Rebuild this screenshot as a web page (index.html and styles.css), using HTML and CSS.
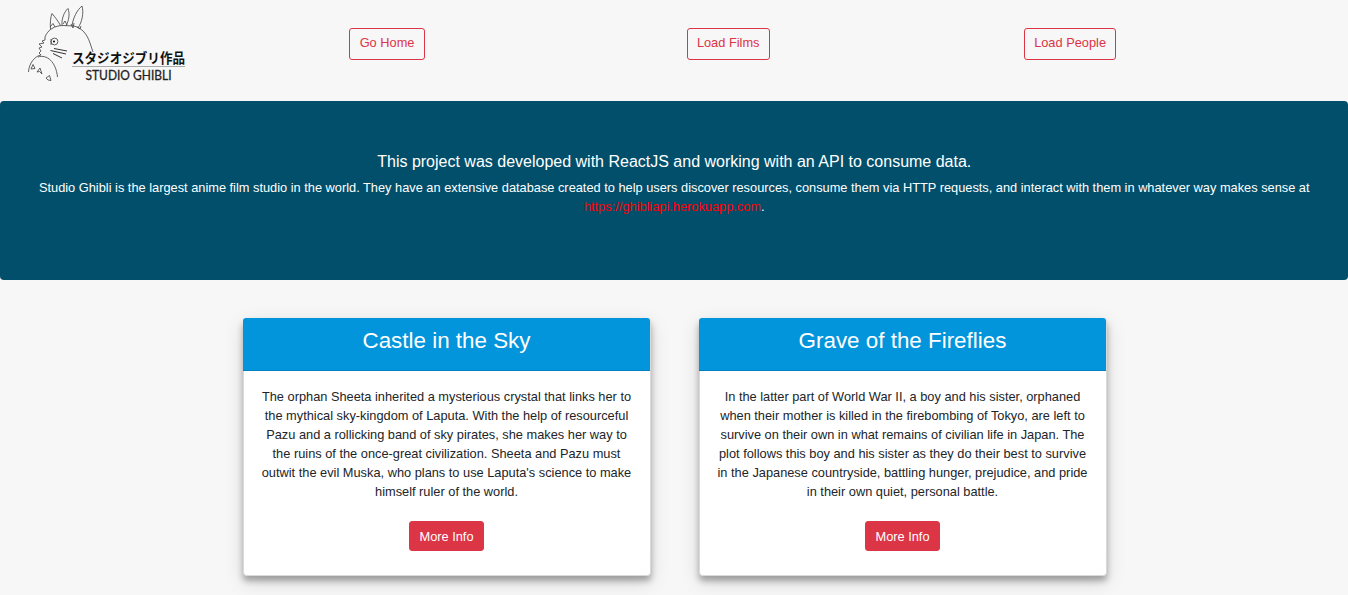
FILE: index.html
```html
<!DOCTYPE html>
<html lang="en">
<head>
<meta charset="utf-8">
<title>Studio Ghibli</title>
<link rel="stylesheet" href="styles.css">
</head>
<body>
<header class="navbar">
  <div class="nav-cell logo-cell">
    <svg class="logo" viewBox="0 0 200 100" role="img" aria-label="Studio Ghibli">
      <g class="sketch">
        <path d="M45 37 C46 34 49 30 52 28.500 C55 26.500 59 25.500 63 25.500 L74 26 C82 28 87 34 90 43 L93 52"/>
        <path d="M50.500 29 C50 23 50.500 17 52 13.500 C55 17 58 21 60.500 25.500 M50 27 L53 23.500 L55 27"/>
        <path d="M62 25 C61.500 19 64 12 68 8.500 C70 14 69 20 66 26 M63 24 L65 21 L67 25"/>
        <path d="M72 26 C73 18 77 10 82 6 C84 13 82 22 78 28 M71 24 L73 28 L74 23 M77 27 L80 29 L81 26"/>
        <path d="M45 37 L45 40 L42 41 L44 43 L39 44 L42 47 L39 48 L41 51 L39 53 L41 55 C35 56 29 63 28.500 72"/>
        <path d="M38 57 C47 54 56 62 57.500 77"/>
        <path d="M31 69 L33 64.500 L35 68.500 Z M37 72 L40 68 L42 74 L39.500 71.500 Z M46 78 L49.500 75.500 L51 80.500 L48 80 Z"/>
        <circle cx="54.500" cy="41.500" r="3.400"/>
        <path d="M51 39 L51 45"/>
        <path class="whisker" d="M54 48.500 L67 51 M50.500 50.500 L66 54 M53 53.500 L62 58"/>
      </g>
      <circle cx="54" cy="41.500" r="1"/>
      <text class="logo-jp" x="72" y="62.500" textLength="113" lengthAdjust="spacingAndGlyphs">スタジオジブリ作品</text>
      <path class="logo-rule" d="M72 66.500 H185"/>
      <text class="logo-en" x="85.500" y="79.500" textLength="86" lengthAdjust="spacingAndGlyphs">STUDIO GHIBLI</text>
    </svg>
  </div>
  <div class="nav-cell"><button class="btn btn-outline">Go Home</button></div>
  <div class="nav-cell"><button class="btn btn-outline">Load Films</button></div>
  <div class="nav-cell"><button class="btn btn-outline">Load People</button></div>
</header>
<section class="hero">
  <h1 class="hero-title">This project was developed with ReactJS and working with an API to consume data.</h1>
  <p class="hero-text">Studio Ghibli is the largest anime film studio in the world. They have an extensive database created to help users discover resources, consume them via HTTP requests, and interact with them in whatever way makes sense at <a class="hero-link" href="https://ghibliapi.herokuapp.com">https://ghibliapi.herokuapp.com</a>.</p>
</section>
<main class="films">
  <article class="card">
    <h2 class="card-header">Castle in the Sky</h2>
    <div class="card-body">
      <p class="card-text">The orphan Sheeta inherited a mysterious crystal that links her to the mythical sky-kingdom of Laputa. With the help of resourceful Pazu and a rollicking band of sky pirates, she makes her way to the ruins of the once-great civilization. Sheeta and Pazu must outwit the evil Muska, who plans to use Laputa's science to make himself ruler of the world.</p>
      <button class="btn btn-solid">More Info</button>
    </div>
  </article>
  <article class="card">
    <h2 class="card-header">Grave of the Fireflies</h2>
    <div class="card-body">
      <p class="card-text">In the latter part of World War II, a boy and his sister, orphaned when their mother is killed in the firebombing of Tokyo, are left to survive on their own in what remains of civilian life in Japan. The plot follows this boy and his sister as they do their best to survive in the Japanese countryside, battling hunger, prejudice, and pride in their own quiet, personal battle.</p>
      <button class="btn btn-solid">More Info</button>
    </div>
  </article>
</main>
</body>
</html>
```
FILE: styles.css
```css
* { box-sizing: border-box; }
body {
  margin: 0;
  height: 595px;
  overflow: hidden;
  background: #f7f7f7;
  color: #212529;
  font-family: "Liberation Sans", Arial, sans-serif;
  font-size: 12.8px;
  line-height: 19px;
}
.navbar { display: grid; grid-template-columns: repeat(4, 337.25px); height: 101px; }
.nav-cell { padding: 28px 0 0 12px; }
.logo-cell { padding: 0; }
.logo { display: block; width: 200px; height: 100px; }
.sketch { fill: none; stroke: #484848; stroke-width: .85; }
.whisker { stroke: #333; stroke-width: 1; }
.logo-rule { stroke: #aaa; stroke-width: 1; }
.logo-jp { font: 700 13.5px "Noto Sans CJK JP", sans-serif; fill: #111; }
.logo-en { font: 13.5px Lato, sans-serif; fill: #222; stroke: #222; stroke-width: .3; }
.btn {
  display: inline-block;
  margin: 0;
  border: 1px solid #dc3545;
  border-radius: 3px;
  font: 12.8px/19px "Liberation Sans", Arial, sans-serif;
  white-space: nowrap;
}
.btn-outline { height: 32px; padding: 4px 9.4px 7px; background: transparent; color: #dc3545; }
.btn-solid { height: 30px; padding: 5px 9.5px 4px; background: #dc3545; color: #fff; }
.hero {
  height: 179px;
  padding: 51px 31.5px 0 32px;
  border-radius: 4px;
  background: #024f6c;
  color: #fff;
  text-align: center;
}
.hero-title { margin: 0 0 6px; font-size: 16px; font-weight: 400; line-height: 20px; }
.hero-text { margin: 0; }
.hero-link { color: #f00; text-decoration: none; }
.films { display: flex; justify-content: center; gap: 48px; padding: 38px 0 0 2px; }
.card {
  width: 408px;
  height: 258px;
  border: 1px solid #d8d9d9;
  border-top: 0;
  border-radius: 4px;
  background: #fff;
  text-align: center;
  box-shadow: 0 5px 6px rgba(0,0,0,.3), 0 6px 20px rgba(0,0,0,.13);
}
.card-header {
  height: 53px;
  margin: 0 0 0 -1px;
  padding-top: 9px;
  border-bottom: 1px solid #0280c0;
  border-radius: 3px 3px 0 0;
  background: #0295db;
  color: #fff;
  font-size: 22.4px;
  font-weight: 400;
  line-height: 27px;
}
.card-body { padding: 16px 17px 0 16px; }
.card-text { margin: 0 0 20px; }
```
